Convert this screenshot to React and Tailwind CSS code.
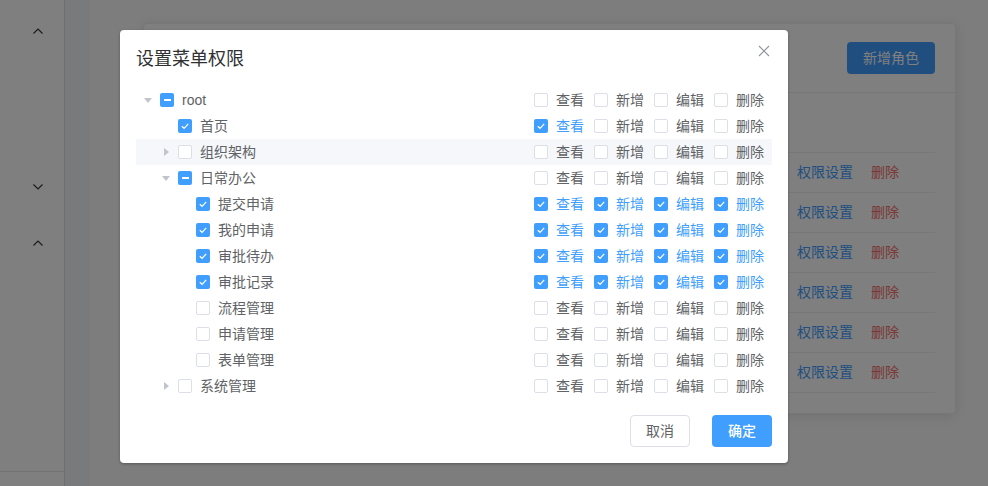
import React from 'react'

const FONT = "font-['Liberation_Sans','Noto_Sans_CJK_SC',sans-serif]"

const PERMS = ['查看', '新增', '编辑', '删除']

const rows = [
  { label: 'root', level: 0, caret: 'down', state: 'half', perms: [0, 0, 0, 0] },
  { label: '首页', level: 1, caret: null, state: 'on', perms: [1, 0, 0, 0] },
  { label: '组织架构', level: 1, caret: 'right', state: 'off', perms: [0, 0, 0, 0], hover: true },
  { label: '日常办公', level: 1, caret: 'down', state: 'half', perms: [0, 0, 0, 0] },
  { label: '提交申请', level: 2, caret: null, state: 'on', perms: [1, 1, 1, 1] },
  { label: '我的申请', level: 2, caret: null, state: 'on', perms: [1, 1, 1, 1] },
  { label: '审批待办', level: 2, caret: null, state: 'on', perms: [1, 1, 1, 1] },
  { label: '审批记录', level: 2, caret: null, state: 'on', perms: [1, 1, 1, 1] },
  { label: '流程管理', level: 2, caret: null, state: 'off', perms: [0, 0, 0, 0] },
  { label: '申请管理', level: 2, caret: null, state: 'off', perms: [0, 0, 0, 0] },
  { label: '表单管理', level: 2, caret: null, state: 'off', perms: [0, 0, 0, 0] },
  { label: '系统管理', level: 1, caret: 'right', state: 'off', perms: [0, 0, 0, 0] },
]

const indent = ['pl-0', 'pl-[18px]', 'pl-[36px]']

function Box({ state }) {
  if (state === 'on') {
    return (
      <span className="flex h-[14px] w-[14px] shrink-0 items-center justify-center rounded-[2px] bg-[#409eff]">
        <svg viewBox="0 0 14 14" className="h-[14px] w-[14px]">
          <path d="M3.8 7.2 L6.1 9.3 L10.2 4.8" fill="none" stroke="#fff" strokeWidth="1.2" />
        </svg>
      </span>
    )
  }
  if (state === 'half') {
    return (
      <span className="flex h-[14px] w-[14px] shrink-0 items-center justify-center rounded-[2px] bg-[#409eff]">
        <span className="h-[2px] w-[7px] bg-white" />
      </span>
    )
  }
  return <span className="h-[14px] w-[14px] shrink-0 rounded-[2px] border border-[#dcdfe6] bg-white" />
}

function Caret({ dir }) {
  if (dir === 'down') {
    return (
      <svg viewBox="0 0 8 5" className="h-[5px] w-[8px]">
        <path d="M0 0 H8 L4 5 Z" fill="#c0c4cc" />
      </svg>
    )
  }
  if (dir === 'right') {
    return (
      <svg viewBox="0 0 5 8" className="h-[8px] w-[5px]">
        <path d="M0 0 L5 4 L0 8 Z" fill="#c0c4cc" />
      </svg>
    )
  }
  return null
}

function Chevron({ up }) {
  return (
    <svg viewBox="0 0 10 6" className="h-[6px] w-[10px]">
      <path d={up ? 'M0.5 5.5 L5 1 L9.5 5.5' : 'M0.5 0.5 L5 5 L9.5 0.5'} fill="none" stroke="#303133" strokeWidth="1.1" />
    </svg>
  )
}

function TreeRow({ row }) {
  return (
    <div className={`flex h-[26px] items-center ${row.hover ? 'bg-[#f5f7fa]' : ''}`}>
      <div className={`flex flex-1 items-center ${indent[row.level]}`}>
        <span className="flex w-6 items-center justify-center">
          <Caret dir={row.caret} />
        </span>
        <Box state={row.state} />
        <span className="ml-2 text-[14px] text-[#606266]">{row.label}</span>
      </div>
      <div className="mr-2 flex items-center gap-[10px]">
        {PERMS.map((p, i) => (
          <label key={p} className="flex items-center gap-2">
            <Box state={row.perms[i] ? 'on' : 'off'} />
            <span className={`text-[14px] ${row.perms[i] ? 'text-[#409eff]' : 'text-[#606266]'}`}>{p}</span>
          </label>
        ))}
      </div>
    </div>
  )
}

export default function App() {
  return (
    <div className={`relative flex h-[486px] w-full overflow-hidden bg-[#fafafa] ${FONT}`}>
      {/* sidebar */}
      <aside className="flex w-[65px] shrink-0 flex-col border-r border-[#dfdfdf] bg-white">
        <div className="flex h-[62px] items-center justify-end pr-[21px]">
          <Chevron up />
        </div>
        <div className="h-[94px]" />
        <div className="flex h-[62px] items-center justify-end pr-[21px]">
          <Chevron />
        </div>
        <div className="flex h-[50px] items-center justify-end pr-[21px]">
          <Chevron up />
        </div>
        <div className="flex-1" />
        <div className="h-[15px] border-t border-[#e4e4e4]" />
      </aside>
      <div className="w-[25px] shrink-0 bg-[#f3f5f9]" />

      {/* main */}
      <main className="flex-1 pl-[53px] pr-[32px] pt-[23px]">
        <div className="rounded border border-[#ebeef5] bg-white shadow-[0_2px_12px_0_rgba(0,0,0,0.1)]">
          <div className="flex justify-end border-b border-[#ebeef5] px-5 py-[18px]">
            <button className="h-8 w-[88px] rounded bg-[#409eff] text-[14px] text-white">新增角色</button>
          </div>
          <div className="p-5">
            <div className="h-[40px] border-b border-[#ebeef5]" />
            {[0, 1, 2, 3, 4, 5].map((i) => (
              <div key={i} className="flex h-[40px] items-center border-b border-[#ebeef5]">
                <div className="flex-1" />
                <div className="flex w-[138px] gap-[18px] text-[14px]">
                  <span className="text-[#409eff]">权限设置</span>
                  <span className="text-[#f56c6c]">删除</span>
                </div>
              </div>
            ))}
          </div>
        </div>
      </main>

      {/* modal overlay */}
      <div className="absolute inset-0 bg-black/50" />

      <div className="absolute left-[120px] top-[30px] w-[668px] rounded bg-white px-4 pb-4 shadow-[0_1px_3px_rgba(0,0,0,0.3)]">
        <div className="pt-[17px] text-[18px] leading-[24px] text-[#303133]">设置菜单权限</div>
        <button className="absolute right-[18px] top-[15px] flex h-3 w-3 items-center justify-center">
          <svg viewBox="0 0 12 12" className="h-3 w-3">
            <path d="M1 1 L11 11 M11 1 L1 11" stroke="#909399" strokeWidth="1.1" />
          </svg>
        </button>

        <div className="mt-4">
          {rows.map((r) => (
            <TreeRow key={r.label} row={r} />
          ))}
        </div>

        <div className="mt-4 flex justify-end gap-[22px]">
          <button className="h-8 w-[60px] rounded border border-[#dcdfe6] bg-white text-[14px] text-[#606266]">取消</button>
          <button className="h-8 w-[60px] rounded bg-[#409eff] text-[14px] font-medium text-white">确定</button>
        </div>
      </div>
    </div>
  )
}
